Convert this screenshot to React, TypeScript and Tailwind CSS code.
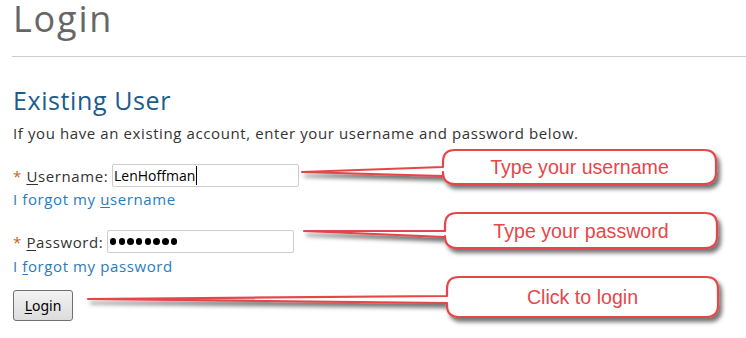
import React from 'react'

interface CalloutProps {
  tipX: number
  tipY: number
  x: number
  y: number
  w: number
  h: number
  j1: number
  j2: number
  text: string
}

const Callout: React.FC<CalloutProps> = ({ tipX, tipY, x, y, w, h, j1, j2, text }) => {
  const r = 12
  const d = `M ${x + r} ${y} H ${x + w - r} Q ${x + w} ${y} ${x + w} ${y + r} V ${y + h - r} Q ${x + w} ${y + h} ${x + w - r} ${y + h} H ${x + r} Q ${x} ${y + h} ${x} ${y + h - r} V ${j2} L ${tipX} ${tipY} L ${x} ${j1} V ${y + r} Q ${x} ${y} ${x + r} ${y} Z`
  return (
    <g>
      <path d={d} fill="#ffffff" stroke="#e5474a" strokeWidth={2.2} strokeLinejoin="round" filter="url(#callout-shadow)" />
      <text
        x={x + w / 2}
        y={y + h / 2 + 7}
        textAnchor="middle"
        fill="#e5474a"
        fontSize={19.6}
        fontFamily="'Liberation Sans', Arial, sans-serif"
      >
        {text}
      </text>
    </g>
  )
}

export default function App() {
  return (
    <div className="relative w-[746px] h-[338px] overflow-hidden bg-white text-[#333] font-['Open_Sans',sans-serif]">
      <div className="pl-[13px]">
        {/* Page title */}
        <h1 className="text-[36px] leading-[38px] tracking-[1.8px] text-[#666]">Login</h1>
      </div>
      <div className="ml-[12px] mt-[18px] h-px bg-[#cccccc]" />

      <div className="pl-[13px]">
        <h2 className="mt-[28px] text-[25px] leading-[30px] tracking-[0.6px] text-[#1b5c8c]">Existing User</h2>
        <p className="mt-[8px] text-[15px] leading-[20px] tracking-[0.6px]">
          If you have an existing account, enter your username and password below.
        </p>

        {/* Username */}
        <div className="mt-[21px] flex items-center h-[23px]">
          <label className="text-[15px] leading-[20px] tracking-[0.6px] w-[99px]">
            <span className="text-[#c8641c]">*</span> <span className="underline underline-offset-2">U</span>sername:
          </label>
          <div className="relative flex items-center w-[187px] h-[23px] border border-[#cdcdcd] rounded-[2px] pl-[1px] text-[14px] text-black">
            LenHoffman
            <span className="ml-[1px] w-px h-[19px] bg-black" />
          </div>
        </div>
        <a className="block mt-[2px] text-[15px] leading-[20px] tracking-[0.6px] text-[#2a7bbd]">
          I forgot my <span className="underline underline-offset-2">u</span>sername
        </a>

        {/* Password */}
        <div className="mt-[21px] flex items-center h-[23px]">
          <label className="text-[15px] leading-[20px] tracking-[0.6px] w-[94px]">
            <span className="text-[#c8641c]">*</span> <span className="underline underline-offset-2">P</span>assword:
          </label>
          <div className="flex items-center gap-[2.3px] w-[187px] h-[23px] border border-[#cdcdcd] rounded-[2px] pl-[2px]">
            {[0, 1, 2, 3, 4, 5, 6, 7].map((i) => (
              <span key={i} className="w-[6.4px] h-[6.4px] rounded-full bg-black" />
            ))}
          </div>
        </div>
        <a className="block mt-[3px] text-[15px] leading-[20px] tracking-[0.6px] text-[#2a7bbd]">
          I <span className="underline underline-offset-2">f</span>orgot my password
        </a>

        <button className="mt-[14px] w-[60px] h-[31px] rounded-[3px] border border-[#707070] bg-gradient-to-b from-[#f3f3f3] to-[#dcdcdc] text-[14px] text-black font-['Noto_Sans',sans-serif]">
          <span className="underline underline-offset-2">L</span>ogin
        </button>
      </div>

      {/* Annotation callouts drawn over the page */}
      <svg className="absolute inset-0 pointer-events-none" width={746} height={338} viewBox="0 0 746 338">
        <defs>
          <filter id="callout-shadow" x="-10%" y="-30%" width="130%" height="180%">
            <feDropShadow dx={3} dy={4} stdDeviation={2} floodColor="#000" floodOpacity={0.55} />
          </filter>
        </defs>
        <Callout tipX={302} tipY={172} x={443} y={150} w={273} h={34} j1={167} j2={176} text="Type your username" />
        <Callout tipX={304} tipY={231} x={445} y={213} w={272} h={35} j1={231} j2={237} text="Type your password" />
        <Callout tipX={88} tipY={299} x={447} y={277} w={271} h={40} j1={296} j2={303} text="Click to login" />
      </svg>
    </div>
  )
}
